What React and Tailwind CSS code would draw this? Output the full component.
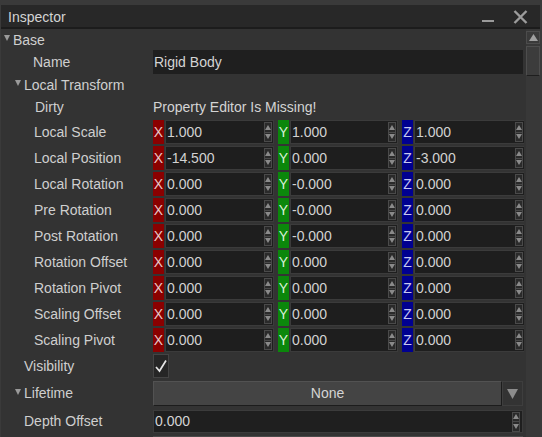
import React from "react";

const font = { fontFamily: '"Liberation Sans", Arial, sans-serif' };

function Tri({ className = "" }) {
  return (
    <svg width="6" height="6" viewBox="0 0 6 6" className={className}>
      <polygon points="0,0 6,0 3,6" fill="#9a9a9a" />
    </svg>
  );
}

function Spinner() {
  return (
    <div className="flex flex-col w-[8px] h-[20px] border border-[#4a4a4a] bg-[#2a2a2a] shrink-0">
      <div className="flex-1 flex items-center justify-center border-b border-[#4a4a4a]">
        <svg width="6" height="5" viewBox="0 0 6 5"><polygon points="3,0 6,5 0,5" fill="#8a8a8a" /></svg>
      </div>
      <div className="flex-1 flex items-center justify-center">
        <svg width="6" height="5" viewBox="0 0 6 5"><polygon points="0,0 6,0 3,5" fill="#8a8a8a" /></svg>
      </div>
    </div>
  );
}

function Comp({ label, value, bg, fg, w }) {
  return (
    <div className="flex h-[24px]">
      <div className={`w-[11px] h-full flex items-center justify-center text-[14px] ${bg} ${fg}`}>{label}</div>
      <div className={`${w} h-full ml-[1px] flex items-center justify-between bg-[#1e1e1e] border border-[#3b3b3b] pl-[1px] pr-[1px]`}>
        <span className="text-[14px] text-[#d2d2d2]">{value}</span>
        <Spinner />
      </div>
    </div>
  );
}

function Label({ children, indent, tri }) {
  return (
    <div className={`w-[152px] shrink-0 flex items-center h-full text-[14px] text-[#cfcfcf] ${indent}`}>
      {tri && <Tri className="mr-[3px] mt-[-4px]" />}
      {children}
    </div>
  );
}

function VecRow({ name, x, y, z }) {
  return (
    <div className="flex h-[24px] mb-[2px]">
      <Label indent="pl-[33px]">{name}</Label>
      <div className="flex gap-[4px]">
        <Comp label="X" value={x} bg="bg-[#8a0000]" fg="text-[#e8c8c8]" w="w-[109px]" />
        <Comp label="Y" value={y} bg="bg-[#0b870b]" fg="text-[#d8f0d8]" w="w-[108px]" />
        <Comp label="Z" value={z} bg="bg-[#000090]" fg="text-[#c8c8f0]" w="w-[111px]" />
      </div>
    </div>
  );
}

export default function App() {
  const vecs = [
    ["Local Scale", "1.000", "1.000", "1.000"],
    ["Local Position", "-14.500", "0.000", "-3.000"],
    ["Local Rotation", "0.000", "-0.000", "0.000"],
    ["Pre Rotation", "0.000", "-0.000", "0.000"],
    ["Post Rotation", "0.000", "-0.000", "0.000"],
    ["Rotation Offset", "0.000", "0.000", "0.000"],
    ["Rotation Pivot", "0.000", "0.000", "0.000"],
    ["Scaling Offset", "0.000", "0.000", "0.000"],
    ["Scaling Pivot", "0.000", "0.000", "0.000"],
  ];
  return (
    <div style={font} className="w-[542px] h-[437px] overflow-hidden bg-[#3a3a3a] pt-[5px] pl-[1px] pr-[2px] flex flex-col">
      <div className="h-[22px] bg-[#282828] flex items-center pl-[7px] pr-[12px] shrink-0">
        <span className="text-[14px] text-[#d4d4d4] flex-1 pt-[3px]">Inspector</span>
        <div className="w-[12px] h-[2px] bg-[#9a9a9a] mt-[10px] mr-[19px]" />
        <svg width="15" height="14" viewBox="0 0 15 14" className="mt-[1px]">
          <path d="M1.5 1 L13.5 13 M13.5 1 L1.5 13" stroke="#9c9c9c" strokeWidth="2.4" />
        </svg>
      </div>
      <div className="h-[2px] bg-[#1c1c1c] shrink-0" />
      <div className="flex flex-1 bg-[#333333]">
        <div className="w-[523px] flex flex-col">
          <div className="flex h-[20px] mt-[1px]">
            <Label indent="pl-[3px]" tri>Base</Label>
          </div>
          <div className="flex h-[24px]">
            <Label indent="pl-[32px]">Name</Label>
            <div className="w-[370px] h-full bg-[#1f1f1f] flex items-center pl-[1px] text-[14px] text-[#d4d4d4]">Rigid Body</div>
          </div>
          <div className="flex h-[22px]">
            <Label indent="pl-[14px]" tri>Local Transform</Label>
          </div>
          <div className="flex h-[22px] mb-[2px]">
            <Label indent="pl-[34px]">Dirty</Label>
            <div className="flex items-center text-[14px] text-[#d4d4d4]">Property Editor Is Missing!</div>
          </div>
          {vecs.map((v) => (
            <VecRow key={v[0]} name={v[0]} x={v[1]} y={v[2]} z={v[3]} />
          ))}
          <div className="flex h-[24px]">
            <Label indent="pl-[23px]">Visibility</Label>
            <div className="w-[16px] h-[24px] bg-[#262626] border border-[#444444] flex items-center justify-center">
              <svg width="12" height="14" viewBox="0 0 12 14">
                <path d="M1 8 L4.5 12 L11 1.5" stroke="#e6e6e6" strokeWidth="1.7" fill="none" />
              </svg>
            </div>
          </div>
          <div className="flex h-[25px] mt-[3px]">
            <Label indent="pl-[14px]" tri>Lifetime</Label>
            <div className="w-[349px] h-full bg-[#444444] border border-[#525252] border-b-[#1c1c1c] border-r-[#1c1c1c] flex items-center justify-center text-[14px] text-[#d4d4d4]">
              None
            </div>
            <div className="w-[21px] h-full border border-[#3e3e3e] flex items-center justify-center">
              <svg width="11" height="10" viewBox="0 0 11 10"><polygon points="0,0 11,0 5.5,10" fill="#8c8c8c" /></svg>
            </div>
          </div>
          <div className="flex h-[23px] mt-[4px]">
            <Label indent="pl-[23px]">Depth Offset</Label>
            <div className="w-[370px] h-full bg-[#1f1f1f] border border-[#3b3b3b] flex items-center justify-between pl-[1px] pr-[2px]">
              <span className="text-[14px] text-[#d4d4d4]">0.000</span>
              <Spinner />
            </div>
          </div>
          <div className="flex h-[23px] mt-[3px]">
            <Label indent="pl-[23px]"></Label>
            <div className="w-[370px] h-full bg-[#3c3c3c] border border-[#4a4a4a]" />
          </div>
        </div>
        <div className="flex-1 flex flex-col pl-[2px] bg-[#333333]">
          <div className="flex-1 bg-[#383838] flex flex-col">
            <div className="h-[13px] mt-[2px] border border-[#4c4c4c] bg-[#3a3a3a] flex items-center justify-center">
              <svg width="9" height="7" viewBox="0 0 9 7"><polygon points="4.5,0 9,7 0,7" fill="#a0a0a0" /></svg>
            </div>
            <div className="h-[2px]" />
            <div className="h-[30px] border border-[#4e4e4e] border-b-[#1e1e1e] bg-[#3c3c3c]" />
          </div>
        </div>
      </div>
    </div>
  );
}
